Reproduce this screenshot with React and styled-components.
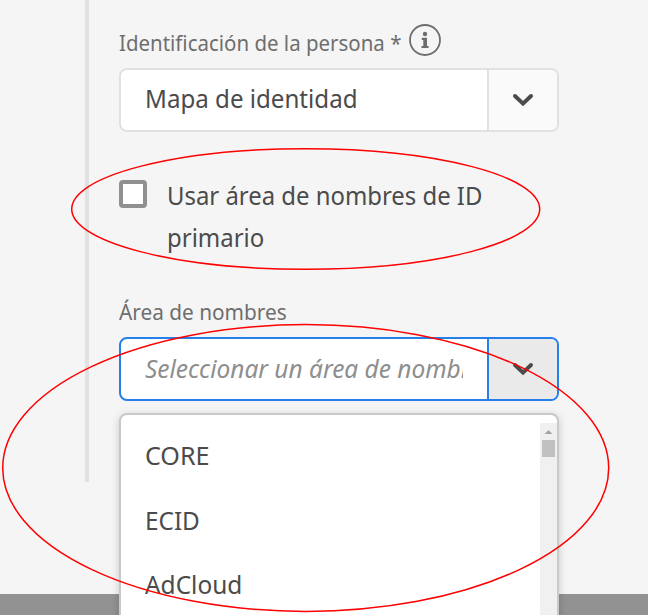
import React from "react";
import styled, { createGlobalStyle } from "styled-components";

const GlobalStyle = createGlobalStyle`
  * { box-sizing: border-box; }
  body { margin: 0; background: #f5f5f5; font-family: "Noto Sans", "Open Sans", sans-serif; }
`;

const Page = styled.main`
  position: relative;
  display: flex;
  flex-direction: column;
  justify-content: space-between;
  width: 648px;
  height: 615px;
  overflow: hidden;
  background: #f5f5f5;
`;

const Section = styled.section`
  height: 482px;
  margin-left: 85px;
  padding: 17px 0 0 30px;
  border-left: 4px solid #e1e1e1;
`;

const Footer = styled.footer`
  height: 21px;
  background: #929292;
`;

const Field = styled.div`
  position: relative;
  width: 440px;
`;

const LabelRow = styled.div`
  display: flex;
  align-items: flex-start;
  gap: 9px;
  height: ${(p) => p.$height}px;
`;

const Text = styled.span`
  display: block;
  white-space: nowrap;
  transform: scaleX(${(p) => p.$condense || 1});
  transform-origin: left center;
`;

const Label = styled(Text)`
  width: 281px;
  margin-top: ${(p) => p.$offset}px;
  color: #6e6e6e;
  font-size: 22px;
  line-height: 30px;
`;

const InfoIcon = styled.svg`
  display: block;
  flex: none;
  width: 32px;
  height: 32px;
  margin-top: 7px;
`;

const Combo = styled.div`
  display: flex;
  height: 64px;
  overflow: hidden;
  border: 2px solid ${(p) => (p.$active ? "#2680eb" : "#e1e1e1")};
  border-radius: 8px;
  background: #fff;
`;

const Value = styled.div`
  flex: 1;
  min-width: 0;
  padding: ${(p) => (p.$placeholder ? 10 : 9)}px 0 0 24px;
  color: ${(p) => (p.$placeholder ? "#8e8e8e" : "#4b4b4b")};
  font-size: 26px;
  font-style: ${(p) => (p.$placeholder ? "italic" : "normal")};
  line-height: 38px;
`;

const Clip = styled.div`
  width: 318px;
  overflow: hidden;
`;

const Trigger = styled.button`
  display: flex;
  align-items: center;
  justify-content: center;
  width: 70px;
  padding: 0;
  border: 0;
  border-left: 2px solid ${(p) => (p.$active ? "#2680eb" : "#e1e1e1")};
  background: ${(p) => (p.$active ? "#eaeaea" : "#fafafa")};
`;

const ChevronIcon = styled.svg`
  display: block;
  width: 22px;
  height: 14px;
`;

const CheckRow = styled.label`
  display: flex;
  gap: 20px;
  height: 165px;
  padding-top: 42px;
`;

const Box = styled.span`
  flex: none;
  width: 28px;
  height: 28px;
  margin-top: 6px;
  border: 4px solid #909090;
  border-radius: 4px;
  background: #fff;
`;

const CheckText = styled.div`
  color: #4b4b4b;
  font-size: 26px;
  line-height: 42px;
`;

const Menu = styled.div`
  position: absolute;
  top: 116px;
  left: 0;
  display: flex;
  justify-content: space-between;
  width: 440px;
  height: 240px;
  padding-top: 8px;
  overflow: hidden;
  border: 2px solid #c9c9c9;
  border-radius: 8px;
  background: #fff;
  box-shadow: 0 2px 8px rgba(0, 0, 0, 0.18);
`;

const Options = styled.div`
  display: flex;
  flex-direction: column;
`;

const Option = styled.div`
  height: 64.5px;
  padding-left: 24px;
  color: #4b4b4b;
  font-size: 26px;
  line-height: 65px;
`;

const Scrollbar = styled.div`
  display: flex;
  flex-direction: column;
  align-items: center;
  width: 17px;
  background: #f0f0f0;
`;

const ScrollArrow = styled.svg`
  display: block;
  width: 17px;
  height: 17px;
`;

const Thumb = styled.div`
  width: 13px;
  height: 17px;
  background: #c1c1c1;
`;

const Annotations = styled.svg`
  position: absolute;
  inset: 0;
  width: 648px;
  height: 615px;
  pointer-events: none;
`;

const Chevron = () => (
  <ChevronIcon viewBox="0 0 22 14" fill="none" stroke="#4b4b4b" strokeWidth="4" strokeLinecap="round">
    <path d="M3 3 L11 10.6 L19 3" />
  </ChevronIcon>
);

const Info = () => (
  <InfoIcon viewBox="0 0 32 32">
    <circle cx="16" cy="16" r="15" fill="none" stroke="#6e6e6e" strokeWidth="1.8" />
    <circle cx="16" cy="10" r="2.2" fill="#6e6e6e" />
    <path d="M12.8 13.8H18V22H19.6V24H12.5V22H14.3V15.9H12.8Z" fill="#6e6e6e" />
  </InfoIcon>
);

const options = [
  { name: "CORE", condense: 0.965 },
  { name: "ECID", condense: 0.935 },
  { name: "AdCloud", condense: 0.94 },
];

export default function App() {
  return (
    <>
      <GlobalStyle />
      <Page>
        <Section>
          <Field>
            <LabelRow $height={51}>
              <Label $offset={10} $condense={0.93}>Identificación de la persona *</Label>
              <Info />
            </LabelRow>
            <Combo>
              <Value><Text $condense={0.928}>Mapa de identidad</Text></Value>
              <Trigger aria-label="Abrir"><Chevron /></Trigger>
            </Combo>
          </Field>
          <CheckRow>
            <Box />
            <CheckText>
              <Text $condense={0.919}>Usar área de nombres de ID</Text>
              <Text $condense={0.922}>primario</Text>
            </CheckText>
          </CheckRow>
          <Field>
            <LabelRow $height={40}>
              <Label $offset={-1} $condense={0.945}>Área de nombres</Label>
            </LabelRow>
            <Combo $active>
              <Value $placeholder>
                <Clip><Text $condense={0.94}>Seleccionar un área de nombres</Text></Clip>
              </Value>
              <Trigger $active aria-label="Abrir"><Chevron /></Trigger>
            </Combo>
            <Menu>
              <Options>
                {options.map((o) => (
                  <Option key={o.name}><Text $condense={o.condense}>{o.name}</Text></Option>
                ))}
              </Options>
              <Scrollbar>
                <ScrollArrow viewBox="0 0 17 17"><path d="M4.7 11L8.5 7L12.3 11Z" fill="#a3a3a3" /></ScrollArrow>
                <Thumb />
              </Scrollbar>
            </Menu>
          </Field>
        </Section>
        <Footer />
        <Annotations viewBox="0 0 648 615" fill="none" stroke="#ff0000" strokeWidth="1.5">
          <ellipse cx="305.7" cy="209" rx="234" ry="60.3" />
          <ellipse cx="305.7" cy="468" rx="303" ry="143.4" />
        </Annotations>
      </Page>
    </>
  );
}
